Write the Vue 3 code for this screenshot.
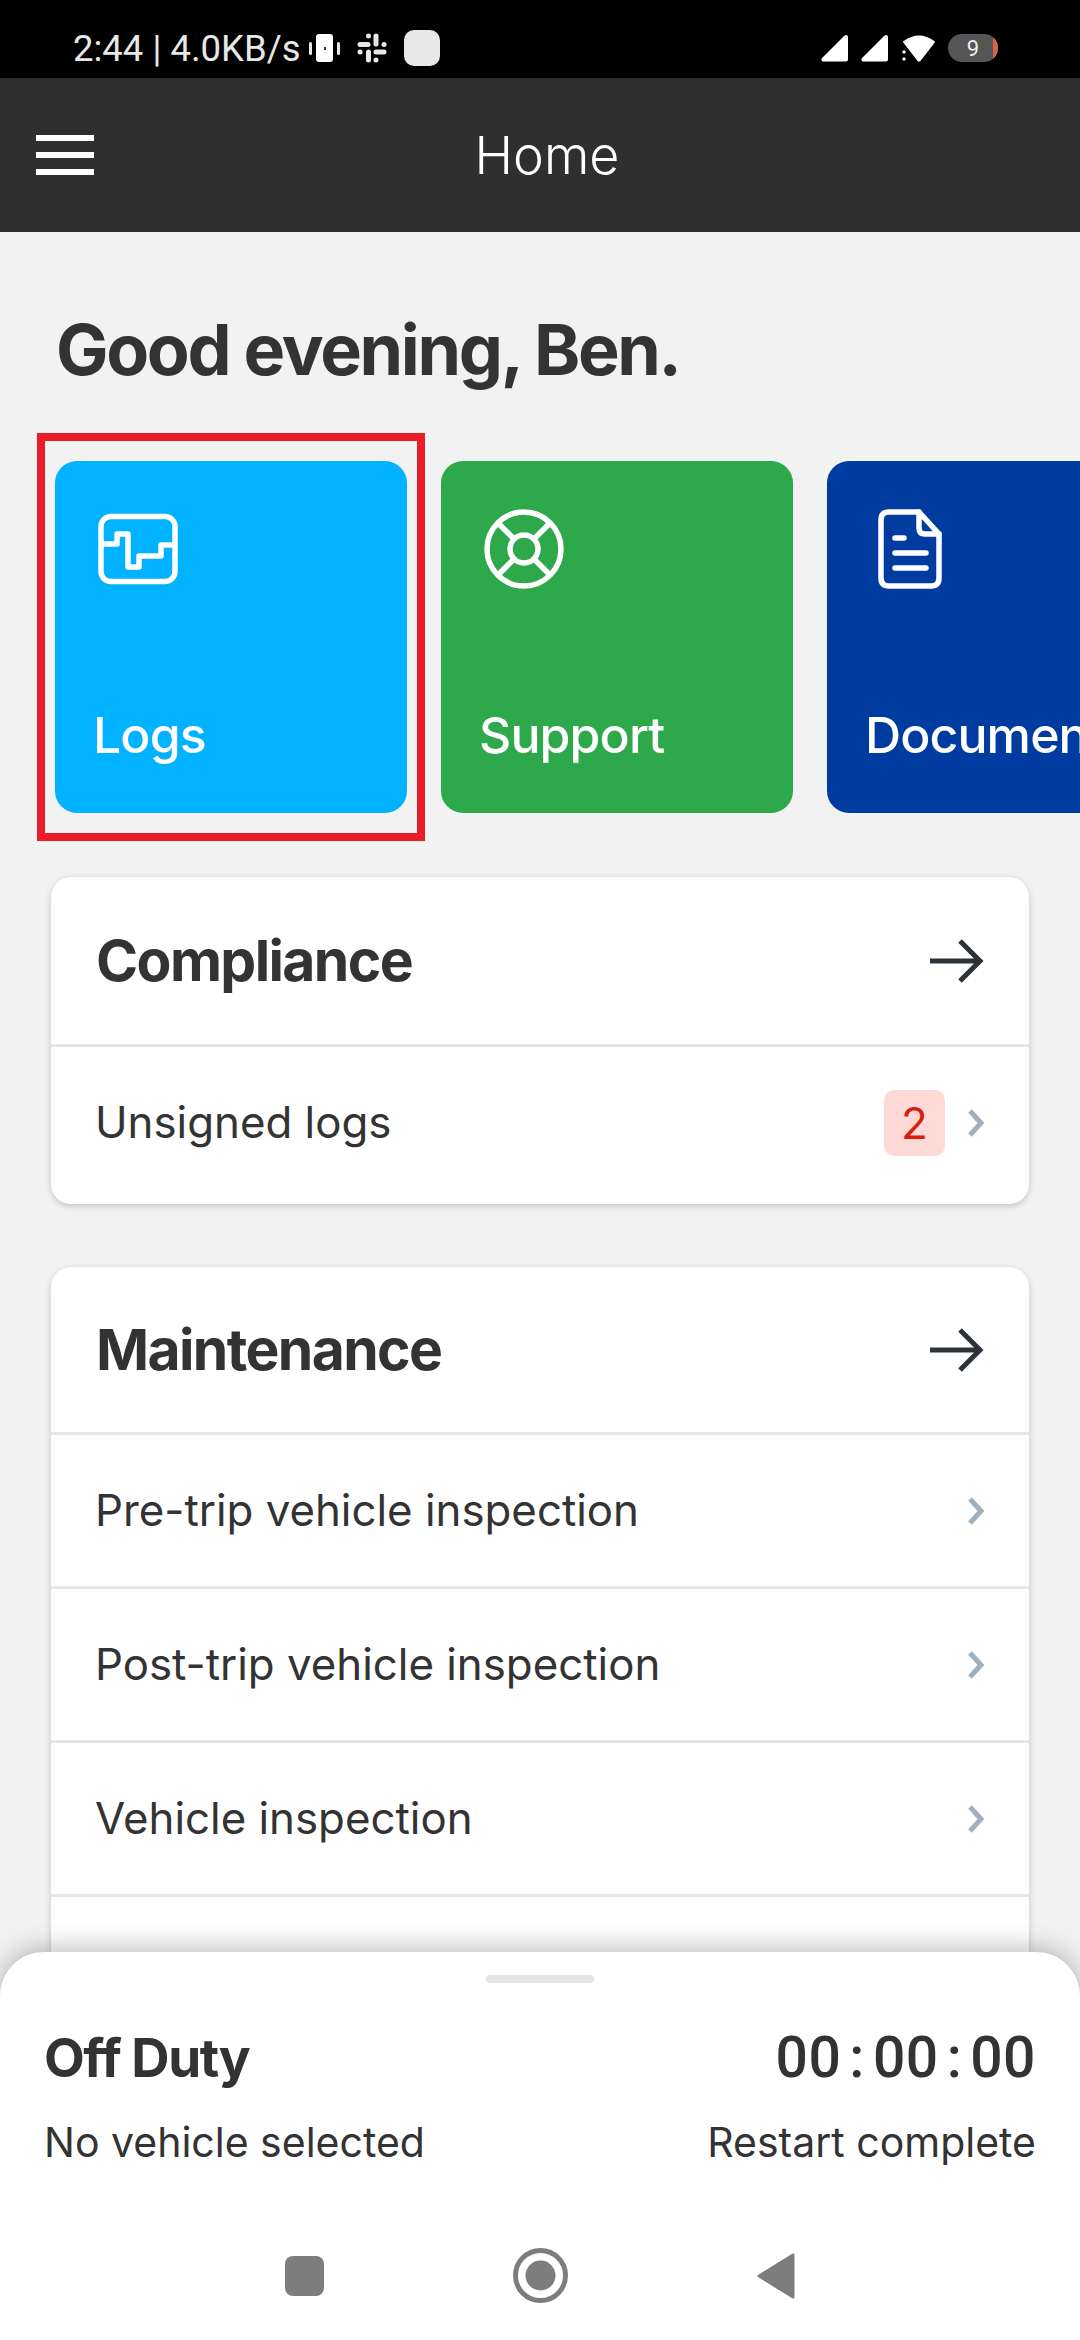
<script setup>
const tiles = [
  { label: 'Logs', color: 'blue', icon: 'logs' },
  { label: 'Support', color: 'green', icon: 'support' },
  { label: 'Documents', color: 'navy', icon: 'docs' }
]

const maintenance = [
  'Pre-trip vehicle inspection',
  'Post-trip vehicle inspection',
  'Vehicle inspection'
]
</script>

<template>
  <div class="screen">
    <!-- status bar -->
    <div class="status-bar">
      <span class="status-text">2:44 | 4.0KB/s</span>
      <svg class="ic-vibrate" width="32" height="28" viewBox="0 0 32 28">
        <rect x="7" y="0" width="17" height="28" rx="3" fill="#fff" />
        <rect x="15" y="13" width="2" height="3" fill="#333" />
        <rect x="0" y="8" width="3" height="13" rx="1.5" fill="#e8e8e8" />
        <rect x="28" y="8" width="3" height="13" rx="1.5" fill="#e8e8e8" />
      </svg>
      <svg class="ic-slack" width="30" height="30" viewBox="0 0 30 30" fill="none" stroke="#e8e8e8" stroke-width="5" stroke-linecap="round">
        <path d="M3 11.5h8M11.5 3v.1M19 3v8M27 11.5h.1M27 19h-8M19 27v-.1M11.5 27v-8M3 19h.1" />
      </svg>
      <div class="app-dot"></div>
      <div class="status-right">
        <svg class="ic-signal" width="28" height="28" viewBox="0 0 28 28">
          <path d="M25 3 L2.5 25.500 H25 Z" fill="#fff" stroke="#fff" stroke-width="4" stroke-linejoin="round" />
        </svg>
        <svg class="ic-signal" width="28" height="28" viewBox="0 0 28 28">
          <path d="M25 3 L2.500 25.500 H25 Z" fill="#fff" stroke="#fff" stroke-width="4" stroke-linejoin="round" />
        </svg>
        <svg class="ic-wifi" width="35" height="28" viewBox="0 0 35 28">
          <path d="M3 8 Q18 -3 33 8 L19 26 Q18 27 17 26 Z" fill="#fff" stroke="#fff" stroke-width="2" stroke-linejoin="round" />
          <circle cx="3" cy="18" r="1.700" fill="#fff" />
          <circle cx="3" cy="25" r="1.700" fill="#fff" />
        </svg>
        <div class="battery">
          <span>9</span>
          <i class="battery-low"></i>
        </div>
      </div>
    </div>

    <!-- app bar -->
    <header class="app-bar">
      <div class="burger"><i></i><i></i><i></i></div>
      <span class="app-title">Home</span>
    </header>

    <main class="content">
      <h1 class="greeting">Good evening, Ben.</h1>

      <div class="tile-strip">
        <div v-for="(t, i) in tiles" :key="t.label" class="tile" :class="[t.color, { marked: i === 0 }]">
          <svg v-if="t.icon === 'logs'" class="tile-icon" width="80" height="80" viewBox="0 0 80 80" fill="none" stroke="#fff" stroke-width="5.500" stroke-linejoin="round">
            <rect x="3" y="7.500" width="74" height="65" rx="10" />
            <path d="M3 35 H19 V25 H30 V58 H41 V47 H63 V36 H77" />
          </svg>
          <svg v-else-if="t.icon === 'support'" class="tile-icon" width="80" height="80" viewBox="0 0 80 80" fill="none" stroke="#fff" stroke-width="5.500">
            <circle cx="40" cy="40" r="37" />
            <circle cx="40" cy="40" r="14" />
            <path d="M14 14 L29 29 M66 14 L51 29 M14 66 L29 51 M66 66 L51 51" />
          </svg>
          <svg v-else class="tile-icon doc" width="64" height="80" viewBox="0 0 64 80" fill="none" stroke="#fff" stroke-width="5.500" stroke-linejoin="round" stroke-linecap="round">
            <path d="M41 3 H11 Q3 3 3 11 V69 Q3 77 11 77 H53 Q61 77 61 69 V25 Z" />
            <path d="M41 3 V19 Q41 25 47 25 H61" />
            <path d="M17 29 H26 M17 44 H48 M17 59 H48" />
          </svg>
          <span class="tile-label">{{ t.label }}</span>
        </div>
      </div>

      <section class="card">
        <div class="card-head first">
          <h2>Compliance</h2>
          <svg class="arrow" width="54" height="44" viewBox="0 0 54 44" fill="none" stroke="#2b3238" stroke-width="5">
            <path d="M0 22 H50 M30 2 L50 22 L30 42" />
          </svg>
        </div>
        <div class="row lifted">
          <span>Unsigned logs</span>
          <span class="badge">2</span>
          <svg class="chev" width="18" height="28" viewBox="0 0 18 28" fill="none" stroke="#9fb0bf" stroke-width="5">
            <path d="M3 2 L14 14 L3 26" />
          </svg>
        </div>
      </section>

      <section class="card">
        <div class="card-head">
          <h2>Maintenance</h2>
          <svg class="arrow" width="54" height="44" viewBox="0 0 54 44" fill="none" stroke="#2b3238" stroke-width="5">
            <path d="M0 22 H50 M30 2 L50 22 L30 42" />
          </svg>
        </div>
        <div v-for="item in maintenance" :key="item" class="row">
          <span>{{ item }}</span>
          <svg class="chev" width="18" height="28" viewBox="0 0 18 28" fill="none" stroke="#9fb0bf" stroke-width="5">
            <path d="M3 2 L14 14 L3 26" />
          </svg>
        </div>
        <div class="row"></div>
      </section>
    </main>

    <!-- duty sheet, sits over the list -->
    <div class="sheet">
      <div class="handle"></div>
      <div class="sheet-line top">
        <span class="duty">Off Duty</span>
        <span class="timer">00<b>:</b>00<b>:</b>00</span>
      </div>
      <div class="sheet-line sub">
        <span>No vehicle selected</span>
        <span>Restart complete</span>
      </div>
      <div class="nav">
        <svg width="39" height="40" viewBox="0 0 39 40"><rect width="39" height="40" rx="8" fill="#7d7d7d" /></svg>
        <svg width="55" height="55" viewBox="0 0 55 55">
          <circle cx="27.500" cy="27.500" r="25" fill="none" stroke="#7d7d7d" stroke-width="5" />
          <circle cx="27.500" cy="27.500" r="15" fill="#7d7d7d" />
        </svg>
        <svg width="38" height="46" viewBox="0 0 38 46">
          <path d="M36 2 V44 L2 23 Z" fill="#7d7d7d" stroke="#7d7d7d" stroke-width="3" stroke-linejoin="round" />
        </svg>
      </div>
    </div>
  </div>
</template>

<style scoped>
.screen {
  position: relative;
  width: 1080px;
  height: 2340px;
  overflow: hidden;
  background: #f2f2f2;
  font-family: Inter, "Liberation Sans", sans-serif;
  color: #333;
  display: flex;
  flex-direction: column;
}

.status-bar {
  height: 78px;
  flex: none;
  background: #000;
  display: flex;
  align-items: center;
  padding: 18px 82px 0 73px;
  box-sizing: border-box;
  color: #e8e8e8;
}

.status-text {
  font-family: Roboto, sans-serif;
  font-size: 36.500px;
  width: 236px;
  white-space: nowrap;
}

.ic-slack {
  margin-left: 16px;
}

.app-dot {
  width: 36px;
  height: 36px;
  margin-left: 17px;
  border-radius: 10px;
  background: #e8e8e8;
}

.status-right {
  margin-left: auto;
  display: flex;
  align-items: center;
  gap: 12px;
}

.battery {
  position: relative;
  width: 50px;
  height: 28px;
  border-radius: 14px;
  background: #555;
  overflow: hidden;
  display: flex;
  align-items: center;
  justify-content: center;
  font-family: Roboto, sans-serif;
  font-size: 22px;
  color: #eee;
}

.battery-low {
  position: absolute;
  top: 0;
  right: 0;
  width: 5px;
  height: 100%;
  background: #e0604a;
}

.app-bar {
  height: 154px;
  flex: none;
  background: #2f2f2f;
  display: flex;
  align-items: center;
  position: relative;
  padding-left: 36px;
}

.burger {
  width: 58px;
  display: flex;
  flex-direction: column;
  gap: 11px;
}

.burger i {
  display: block;
  height: 6px;
  background: #fff;
}

.app-title {
  flex: 1;
  text-align: center;
  margin-right: 80px;
  color: #fff;
  font-size: 52px;
  font-weight: 300;
}

.content {
  flex: 1;
  min-height: 0;
}

.greeting {
  margin: 0;
  padding: 80px 0 0 56px;
  font-size: 70px;
  line-height: 76px;
  letter-spacing: -2.300px;
  font-weight: 700;
  color: #333;
}

.tile-strip {
  display: flex;
  gap: 34px;
  padding: 73px 0 64px 55px;
  overflow: hidden;
}

.tile {
  position: relative;
  flex: none;
  width: 352px;
  height: 352px;
  box-sizing: border-box;
  border-radius: 22px;
  padding: 48px 0 0 39px;
  color: #fff;
  display: flex;
  flex-direction: column;
  align-items: flex-start;
}

.tile.blue { background: #00b2ff; }
.tile.green { background: #2da84b; }
.tile.navy { background: #003ba0; }

.tile.marked::after {
  content: '';
  position: absolute;
  inset: -28px -18px;
  border: 8px solid #ec1c2a;
}

.tile-icon {
  margin-left: 4px;
}

.tile-icon.doc {
  margin-left: 12px;
}

.tile-label {
  margin: 116px 0 0 -1px;
  font-size: 50px;
  line-height: 60px;
  font-weight: 500;
  letter-spacing: -0.900px;
  white-space: nowrap;
}

.card {
  margin: 0 51px 63px;
  background: #fff;
  border-radius: 20px;
  box-shadow: 0 2px 6px rgba(0, 0, 0, 0.2);
}

.card-head {
  height: 168px;
  box-sizing: border-box;
  display: flex;
  align-items: center;
  justify-content: space-between;
  padding: 0 45px 0 45px;
  border-bottom: 3px solid #e6e6e6;
}

.card-head.first {
  height: 170px;
}

.card-head h2 {
  margin: 0;
  font-size: 57px;
  letter-spacing: -1.600px;
  font-weight: 700;
  color: #333;
}

.arrow {
  flex: none;
}

.row {
  height: 154px;
  box-sizing: border-box;
  display: flex;
  align-items: center;
  padding: 0 44px 0 44px;
  font-size: 43.800px;
  color: #333;
  border-bottom: 3px solid #e6e6e6;
}

.row:last-child {
  border-bottom: 0;
  height: 157px;
}

.row.lifted {
  padding-bottom: 6px;
}

.row > span:first-child {
  flex: 1;
}

.row > .chev {
  margin-left: auto;
}

.badge {
  flex: none;
  width: 61px;
  height: 66px;
  margin-right: 22px;
  border-radius: 10px;
  background: #ffd9d5;
  color: #d61f10;
  display: flex;
  align-items: center;
  justify-content: center;
  font-size: 44px;
}

.badge + .chev {
  margin-left: 0;
}

.sheet {
  position: absolute;
  left: 0;
  right: 0;
  bottom: 0;
  height: 388px;
  box-sizing: border-box;
  background: #fff;
  border-radius: 44px 44px 0 0;
  box-shadow: 0 -4px 26px rgba(0, 0, 0, 0.26);
  padding: 23px 44px 0 44px;
}

.handle {
  width: 108px;
  height: 8px;
  margin: 0 auto;
  border-radius: 4px;
  background: #e4e4e4;
}

.sheet-line {
  display: flex;
  justify-content: space-between;
  align-items: baseline;
}

.sheet-line.top {
  margin-top: 40px;
  line-height: 70px;
}

.duty {
  font-size: 53px;
  letter-spacing: -1.500px;
  font-weight: 700;
}

.timer {
  font-family: Roboto, sans-serif;
  font-size: 57px;
  font-weight: 500;
  letter-spacing: 0.5px;
}

.timer b {
  font-weight: 500;
  margin: 0 8px;
}

.sheet-line.sub {
  margin-top: 21px;
  font-size: 41px;
  line-height: 56px;
}

.nav {
  margin-top: 78px;
  display: flex;
  align-items: center;
  justify-content: center;
  gap: 189px;
}
</style>
